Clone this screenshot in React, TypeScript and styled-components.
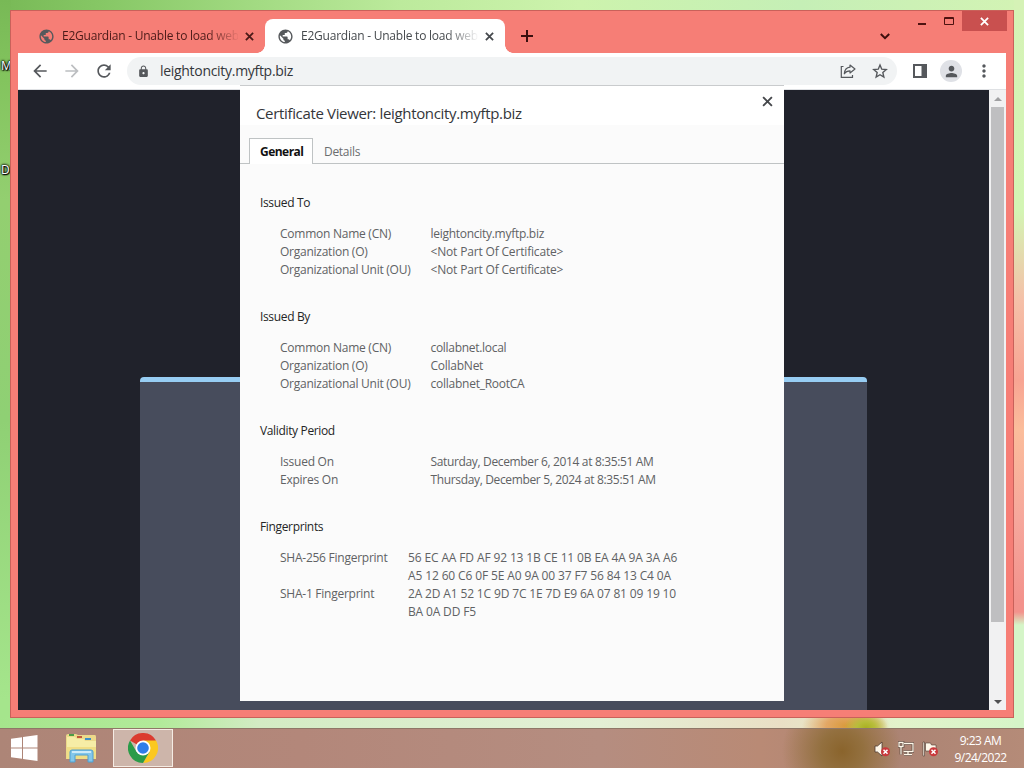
import type {ReactNode} from 'react'
import styled, {createGlobalStyle} from 'styled-components'
import {
    MdArrowBack,
    MdArrowForward,
    MdLock,
    MdMoreVert,
    MdPerson,
    MdPublic,
    MdRefresh,
} from 'react-icons/md'

const GlobalStyle = createGlobalStyle`
    * {
        box-sizing: border-box;
    }

    body {
        margin: 0;
        overflow: hidden;
        font-family: 'Open Sans', 'Noto Sans', sans-serif;
    }

    svg {
        display: block;
        flex: none;
    }
`

const Screen = styled.div`
    width: 1024px;
    height: 768px;
    display: flex;
    flex-direction: column;
    overflow: hidden;
`

const Desktop = styled.div`
    position: relative;
    flex: 1;
    background:
        radial-gradient(ellipse 22px 16px at 866px 728px, #a9b021 0, #b7bd3a 40%, transparent 100%),
        radial-gradient(ellipse 44px 22px at 846px 726px, #d99a3c 0, #e3a765 45%, transparent 100%),
        linear-gradient(180deg, #d5f2b6 0, #d3f5b4 210px, #f5c0a8 300px, #f8a493 380px, #fbbd9b 430px, #f6a79c 520px, #f3928c 600px, #f3928c 612px, #d5f5c8 625px) 1014px 0 / 10px 728px no-repeat,
        linear-gradient(90deg, #a5e58c 0, #b2ea9a 160px, #d3ecc4 260px, #e3f0d5 600px, #eadfc5 780px, #e2f3cb 900px, #d5f5c8 100%) 0 717px / 100% 11px no-repeat,
        linear-gradient(180deg, #78b956 0, #83c45e 80px, #93cf70 200px, #8fd074 420px, #a5e58c 700px) 0 0 / 11px 728px no-repeat,
        linear-gradient(90deg, #78b956 0, #86c765 100px, #a3db83 260px, #bcea9c 400px, #cdf3ad 580px, #c5efb6 800px, #d3f3b4 100%);
`

const ShortcutLabel = styled.span<{$top: number}>`
    position: absolute;
    left: 1px;
    top: ${({$top}) => $top}px;
    font-size: 12px;
    line-height: 16px;
    color: #fff;
    text-shadow: 0 0 2px #000, 1px 1px 1px #000, 0 0 2px #000, 0 0 3px #000;
`

const Window = styled.div`
    position: absolute;
    left: 10px;
    top: 10px;
    width: 1004px;
    height: 708px;
    display: flex;
    flex-direction: column;
    padding: 0 7px 7px;
    background: #f67e76;
    border: 1px solid #c9615a;
`

const TabStrip = styled.div`
    height: 42px;
    display: flex;
    align-items: flex-end;
    padding-left: 8px;
`

const Tab = styled.div<{$active?: boolean}>`
    position: relative;
    width: ${({$active}) => ($active ? 240 : 239)}px;
    height: 34px;
    display: flex;
    align-items: center;
    padding: 0 11px 0 12px;
    color: ${({$active}) => ($active ? '#45494d' : '#4b1a18')};
    background: ${({$active}) => ($active ? '#fff' : 'transparent')};
    border-radius: 8px 8px 0 0;

    &::before,
    &::after {
        content: '';
        display: ${({$active}) => ($active ? 'block' : 'none')};
        position: absolute;
        bottom: 0;
        width: 8px;
        height: 8px;
    }

    &::before {
        left: -8px;
        background: radial-gradient(circle at 0 0, transparent 7.5px, #fff 8px);
    }

    &::after {
        right: -8px;
        background: radial-gradient(circle at 100% 0, transparent 7.5px, #fff 8px);
    }
`

const TabIcon = styled(MdPublic)`
    width: 17px;
    height: 17px;
    color: #56595c;
`

const TabTitle = styled.span`
    flex: 1;
    margin: -2px 7px 0 7px;
    font-size: 12px;
    letter-spacing: -0.23px;
    white-space: nowrap;
    overflow: hidden;
    mask-image: linear-gradient(90deg, #000 145px, transparent 178px);
`

const NewTab = styled.div`
    height: 34px;
    display: flex;
    align-items: center;
    margin-left: 16px;
    color: #3a0f0e;
`

const StripEnd = styled.div`
    align-self: stretch;
    flex: 1;
    display: flex;
    justify-content: flex-end;
    color: #3d0f0d;
`

const TabSearch = styled.div`
    padding: 22px 18px 0 0;
`

const WindowButton = styled.div<{$close?: boolean}>`
    width: ${({$close}) => ($close ? 45 : 27)}px;
    height: 20px;
    display: flex;
    align-items: center;
    justify-content: center;
    color: ${({$close}) => ($close ? '#fff' : '#4e1210')};
    background: ${({$close}) => ($close ? '#c9504f' : 'transparent')};
    margin-right: ${({$close}) => ($close ? -1 : 0)}px;
`

const Toolbar = styled.div`
    height: 37px;
    display: flex;
    align-items: center;
    padding: 0 12px;
    background: #fff;
    color: #55585c;
    border-bottom: 1px solid #dfe1e4;
`

const NavButton = styled.div<{$disabled?: boolean}>`
    width: 20px;
    margin-right: 12px;
    display: flex;
    justify-content: center;
    color: ${({$disabled}) => ($disabled ? '#bcbec1' : '#55585c')};
`

const AddressBar = styled.div`
    width: 770px;
    height: 28px;
    display: flex;
    align-items: center;
    gap: 16px;
    padding: 0 9px 0 10px;
    margin: 0 16px 0 1px;
    border-radius: 14px;
    background: #f1f3f4;
`

const Address = styled.span`
    flex: 1;
    margin: -1px 0 0 -6px;
    font-size: 14px;
    letter-spacing: -0.3px;
    color: #34373b;
`

const Avatar = styled.div`
    width: 22px;
    height: 22px;
    margin: 0 12px 0 13px;
    display: flex;
    align-items: center;
    justify-content: center;
    border-radius: 50%;
    background: #dfe1e6;
`

const Page = styled.div`
    flex: 1;
    display: flex;
    background: #20222b;
`

const PageBody = styled.div`
    flex: 1;
    display: flex;
    padding: 287px 122px 0;
    overflow: hidden;
`

const PageCard = styled.div`
    flex: 1;
    border-top: 5px solid #97cdf3;
    border-radius: 4px 4px 0 0;
    background: #474c5c;
`

const Scrollbar = styled.div`
    width: 17px;
    display: flex;
    flex-direction: column;
    align-items: center;
    background: #f1f1f2;
`

const ScrollArrow = styled.div`
    height: 17px;
    display: flex;
    align-items: center;
`

const ScrollThumb = styled.div`
    width: 13px;
    height: 515px;
    margin-bottom: auto;
    background: #bfbfc1;
`

const Dialog = styled.div`
    position: absolute;
    left: 229px;
    top: 74px;
    width: 544px;
    height: 616px;
    display: flex;
    flex-direction: column;
    background: #fbfbfb;
    border-top: 1px solid #c9cbcd;
`

const DialogHeader = styled.div`
    height: 39px;
    display: flex;
    justify-content: space-between;
    padding: 10px 11px 0 16px;
    background: #fff;
    color: #45474b;
`

const DialogTitle = styled.h1`
    margin: 6px 0 0;
    font-size: 15px;
    line-height: 22px;
    font-weight: 400;
    letter-spacing: -0.34px;
    white-space: nowrap;
    color: #34363a;
`

const DialogTabs = styled.div`
    height: 39px;
    display: flex;
    align-items: flex-end;
    padding-left: 9px;
    box-shadow: inset 0 -1px #bfc3c4;
`

const DialogTab = styled.div<{$selected?: boolean}>`
    height: 26px;
    width: ${({$selected}) => ($selected ? '64px' : 'auto')};
    padding: ${({$selected}) => ($selected ? '0 0 0 10px' : '1px 11px 0')};
    font-size: 12px;
    line-height: 26px;
    font-weight: ${({$selected}) => ($selected ? 700 : 400)};
    letter-spacing: ${({$selected}) => ($selected ? -0.52 : -0.3)}px;
    color: ${({$selected}) => ($selected ? '#111' : '#6b6d6f')};
    background: ${({$selected}) => ($selected ? '#fff' : 'transparent')};
    border: solid #bfc3c4;
    border-width: ${({$selected}) => ($selected ? '1px 1px 0' : '0')};
`

const Details = styled.div`
    padding: 30px 20px 0;
    font-size: 12px;
    line-height: 18px;
`

const Section = styled.section`
    margin-bottom: 29px;
`

const SectionTitle = styled.h2`
    margin: 0 0 13px;
    font-size: 12px;
    font-weight: 400;
    letter-spacing: -0.35px;
    color: #242526;
`

const Fields = styled.dl<{$labelWidth: number}>`
    margin: 0 0 0 20px;
    display: grid;
    grid-template-columns: ${({$labelWidth}) => $labelWidth}px 1fr;
    color: #606264;
`

const Label = styled.dt`
    letter-spacing: -0.25px;
`

const Value = styled.dd<{$spacing: number}>`
    margin: 0;
    letter-spacing: ${({$spacing}) => $spacing}px;
    white-space: pre-line;
`

const Taskbar = styled.div`
    height: 40px;
    display: flex;
    align-items: center;
    padding-bottom: 1px;
    border-top: 1px solid #8f7767;
    background:
        radial-gradient(ellipse 60px 60px at 842px 22px, #8a642c 0, #93703f 35%, transparent 100%),
        linear-gradient(90deg, #ad8577 0, #b3877a 300px, #b58d80 600px, #b98a75 760px, #ac8474 900px, #b58b78 100%);
`

const StartButton = styled.div`
    width: 53px;
    padding-left: 11px;
`

const TaskButton = styled.div<{$active?: boolean}>`
    width: 60px;
    height: 38px;
    display: flex;
    align-items: center;
    justify-content: center;
    padding-right: ${({$active}) => ($active ? 0 : 3)}px;
    margin-right: ${({$active}) => ($active ? 'auto' : '0')};
    border: ${({$active}) => ($active ? '1px solid #f5ece4' : '0')};
    background: ${({$active}) => ($active ? '#cdb5aa' : 'transparent')};
`

const Tray = styled.div`
    display: flex;
    gap: 8px;
    align-items: center;
    padding-top: 2px;
    margin-right: -1px;
`

const Clock = styled.div`
    width: 87px;
    padding: 2px 0 0 0;
    text-align: center;
    font-size: 12px;
    line-height: 17px;
    letter-spacing: -0.52px;
    color: #fff;
`

function CrossIcon({size = 10, width = 2}: {size?: number; width?: number}) {
    return (
        <svg width={size} height={size} viewBox="0 0 10 10" stroke="currentColor" strokeWidth={width}>
            <path d="M1 1l8 8M9 1L1 9"/>
        </svg>
    )
}

function ShareIcon() {
    return (
        <svg width="16" height="16" viewBox="0 0 16 16" fill="none" stroke="currentColor" strokeWidth="1.2">
            <path d="M3.500 3.500H1.300v10.800h11.200v-2.300"/>
            <path d="M10 2l5 4-5 4V7.800C7.500 7.800 5.600 8.700 4.300 10.800 4.600 7.200 6.500 4.600 10 4.200z" strokeLinejoin="round"/>
        </svg>
    )
}

function StarIcon() {
    return (
        <svg width="16" height="16" viewBox="0 0 16 16" fill="none" stroke="currentColor" strokeWidth="1.4">
            <path d="M8 2l1.750 4.200 4.500.400-3.400 3 1 4.400L8 11.700 4.150 14l1-4.400-3.400-3 4.500-.4z"/>
        </svg>
    )
}

function SidePanelIcon() {
    return (
        <svg width="14" height="14" viewBox="0 0 14 14">
            <path d="M1 1h12v12H1z" fill="none" stroke="currentColor" strokeWidth="2"/>
            <path d="M8.500 0H14v14H8.500z" fill="currentColor"/>
        </svg>
    )
}

function WindowsLogo() {
    return (
        <svg width="27" height="26" viewBox="0 0 27 26" fill="#fff">
            <path d="M0 3.700L11 2.200v10.300H0zM12 2L26.500 0v12.500H12zM0 13.500h11v10.300L0 22.300zM12 13.500h14.500V26L12 24z"/>
        </svg>
    )
}

function ExplorerIcon() {
    return (
        <svg width="34" height="32" viewBox="0 0 34 32">
            <path d="M1 4q0-2 2-2h8l2 1h17q1 0 1 2v22H1z" fill="#ecd98a"/>
            <path d="M4 2h5v2H4z" fill="#4b9c45"/>
            <path d="M12 4h5v2h-5z" fill="#c2593a"/>
            <path d="M20 6h6v2h-6z" fill="#3c8fc9"/>
            <path d="M2 5h8l2 2h7l1 2h11v18H2z" fill="#f6eda6"/>
            <path d="M2 15h29v12H2z" fill="#f0de86"/>
            <path d="M5 30V20q0-2 2-2h19q2 0 2 2v10h-5v-7H10v7z" fill="#83c7ea" stroke="#4f9fd0"/>
            <path d="M7 20h19" stroke="#cdebf8" strokeWidth="2"/>
        </svg>
    )
}

function ChromeLogo() {
    return (
        <svg width="30" height="30" viewBox="0 0 48 48">
            <path d="M24 24L3.200 12A24 24 0 0 1 44.800 12z" fill="#db3b2f"/>
            <path d="M24 12h20.800A24 24 0 0 1 24 48l10.400-18z" fill="#fbc81f"/>
            <path d="M3.200 12A24 24 0 0 0 24 48l10.400-18L24 34 13.600 30z" fill="#2a9b48"/>
            <circle cx="24" cy="24" r="12" fill="#fff"/>
            <circle cx="24" cy="24" r="9.300" fill="#2f7de9"/>
        </svg>
    )
}

function ErrorBadge() {
    return (
        <g>
            <circle cx="11.500" cy="10.800" r="4.500" fill="#c9393c"/>
            <path d="M9.500 8.800l4 4M13.500 8.800l-4 4" stroke="#fff" strokeWidth="1.500"/>
        </g>
    )
}

function TrayIcon({children}: {children: ReactNode}) {
    return (
        <svg width="16" height="16" viewBox="0 0 16 16">
            {children}
        </svg>
    )
}

interface CertificateSection {
    title: string
    labelWidth: number
    fields: {label: string; value: string; spacing: number}[]
}

const sections: CertificateSection[] = [
    {
        title: 'Issued To',
        labelWidth: 150.5,
        fields: [
            {label: 'Common Name (CN)', value: 'leightoncity.myftp.biz', spacing: -0.28},
            {label: 'Organization (O)', value: '<Not Part Of Certificate>', spacing: -0.17},
            {label: 'Organizational Unit (OU)', value: '<Not Part Of Certificate>', spacing: -0.17},
        ],
    },
    {
        title: 'Issued By',
        labelWidth: 150.5,
        fields: [
            {label: 'Common Name (CN)', value: 'collabnet.local', spacing: -0.3},
            {label: 'Organization (O)', value: 'CollabNet', spacing: -0.25},
            {label: 'Organizational Unit (OU)', value: 'collabnet_RootCA', spacing: -0.25},
        ],
    },
    {
        title: 'Validity Period',
        labelWidth: 150.5,
        fields: [
            {label: 'Issued On', value: 'Saturday, December 6, 2014 at 8:35:51 AM', spacing: -0.35},
            {label: 'Expires On', value: 'Thursday, December 5, 2024 at 8:35:51 AM', spacing: -0.35},
        ],
    },
    {
        title: 'Fingerprints',
        labelWidth: 128,
        fields: [
            {
                label: 'SHA-256 Fingerprint',
                value: '56 EC AA FD AF 92 13 1B CE 11 0B EA 4A 9A 3A A6\nA5 12 60 C6 0F 5E A0 9A 00 37 F7 56 84 13 C4 0A',
                spacing: -0.13,
            },
            {
                label: 'SHA-1 Fingerprint',
                value: '2A 2D A1 52 1C 9D 7C 1E 7D E9 6A 07 81 09 19 10\nBA 0A DD F5',
                spacing: -0.15,
            },
        ],
    },
]

function BrowserTab({title, active}: {title: string; active?: boolean}) {
    return (
        <Tab $active={active}>
            <TabIcon/>
            <TabTitle>{title}</TabTitle>
            <CrossIcon size={9}/>
        </Tab>
    )
}

function CertificateViewer() {
    return (
        <Dialog>
            <DialogHeader>
                <DialogTitle>Certificate Viewer: leightoncity.myftp.biz</DialogTitle>
                <CrossIcon size={11} width={1.7}/>
            </DialogHeader>
            <DialogTabs>
                <DialogTab $selected>General</DialogTab>
                <DialogTab>Details</DialogTab>
            </DialogTabs>
            <Details>
                {sections.map((section) => (
                    <Section key={section.title}>
                        <SectionTitle>{section.title}</SectionTitle>
                        <Fields $labelWidth={section.labelWidth}>
                            {section.fields.map((field) => [
                                <Label key={field.label}>{field.label}</Label>,
                                <Value key={`${field.label}-value`} $spacing={field.spacing}>{field.value}</Value>,
                            ])}
                        </Fields>
                    </Section>
                ))}
            </Details>
        </Dialog>
    )
}

export default function App() {
    return (
        <Screen>
            <GlobalStyle/>
            <Desktop>
                <ShortcutLabel $top={58}>M</ShortcutLabel>
                <ShortcutLabel $top={162}>D</ShortcutLabel>
                <Window>
                    <TabStrip>
                        <BrowserTab title="E2Guardian - Unable to load web"/>
                        <BrowserTab title="E2Guardian - Unable to load web" active/>
                        <NewTab>
                            <svg width="12" height="12" viewBox="0 0 12 12" stroke="currentColor" strokeWidth="2">
                                <path d="M6 0v12M0 6h12"/>
                            </svg>
                        </NewTab>
                        <StripEnd>
                            <TabSearch>
                                <svg width="10" height="7" viewBox="0 0 10 7" fill="none" stroke="currentColor" strokeWidth="2">
                                    <path d="M.8 1L5 5.200 9.200 1"/>
                                </svg>
                            </TabSearch>
                            <WindowButton>
                                <svg width="8" height="20" viewBox="0 0 8 20">
                                    <path d="M0 12h8v2H0z" fill="currentColor"/>
                                </svg>
                            </WindowButton>
                            <WindowButton>
                                <svg width="10" height="8" viewBox="0 0 10 8" fill="none" stroke="currentColor">
                                    <path d="M.5.5h9v7h-9zM0 1.500h10"/>
                                </svg>
                            </WindowButton>
                            <WindowButton $close>
                                <CrossIcon size={9}/>
                            </WindowButton>
                        </StripEnd>
                    </TabStrip>
                    <Toolbar>
                        <NavButton><MdArrowBack size={20}/></NavButton>
                        <NavButton $disabled><MdArrowForward size={20}/></NavButton>
                        <NavButton><MdRefresh size={20}/></NavButton>
                        <AddressBar>
                            <MdLock size={13}/>
                            <Address>leightoncity.myftp.biz</Address>
                            <ShareIcon/>
                            <StarIcon/>
                        </AddressBar>
                        <SidePanelIcon/>
                        <Avatar><MdPerson size={17}/></Avatar>
                        <MdMoreVert size={20}/>
                    </Toolbar>
                    <Page>
                        <PageBody>
                            <PageCard/>
                        </PageBody>
                        <Scrollbar>
                            <ScrollArrow>
                                <svg width="8" height="4" viewBox="0 0 8 4"><path d="M0 4l4-4 4 4z" fill="#a0a0a2"/></svg>
                            </ScrollArrow>
                            <ScrollThumb/>
                            <ScrollArrow>
                                <svg width="8" height="4" viewBox="0 0 8 4"><path d="M0 0l4 4 4-4z" fill="#505053"/></svg>
                            </ScrollArrow>
                        </Scrollbar>
                    </Page>
                    <CertificateViewer/>
                </Window>
            </Desktop>
            <Taskbar>
                <StartButton><WindowsLogo/></StartButton>
                <TaskButton><ExplorerIcon/></TaskButton>
                <TaskButton $active><ChromeLogo/></TaskButton>
                <Tray>
                    <TrayIcon>
                        <path d="M1 5h2.500L8 1v14l-4.500-4H1z" fill="#fff8ea" stroke="#4c3930" strokeWidth=".8"/>
                        <ErrorBadge/>
                    </TrayIcon>
                    <TrayIcon>
                        <g fill="none">
                            <path d="M6 2.500h9v8H5.500M10 10.500v3M6 13.500h8M1 1.500h4v4H1zM3 5.500v8" stroke="#4c3930" strokeWidth="2.600"/>
                            <path d="M6 2.500h9v8H5.500M10 10.500v3M6 13.500h8M1 1.500h4v4H1zM3 5.500v8" stroke="#fff8ea" strokeWidth="1.300"/>
                        </g>
                    </TrayIcon>
                    <TrayIcon>
                        <path d="M1 1h1.500v14H1zM3.500 2h5l1 2H14v6H3.500z" fill="#fff8ea" stroke="#4c3930" strokeWidth=".6"/>
                        <ErrorBadge/>
                    </TrayIcon>
                </Tray>
                <Clock>
                    <div>9:23 AM</div>
                    <div>9/24/2022</div>
                </Clock>
            </Taskbar>
        </Screen>
    )
}
